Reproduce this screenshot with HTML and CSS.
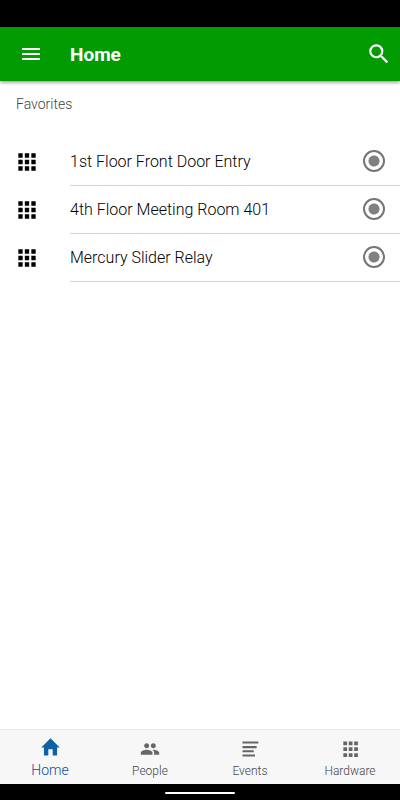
FILE: index.html
```html
<!DOCTYPE html>
<html lang="en">
<head>
    <meta charset="UTF-8">
    <meta name="viewport" content="width=device-width, initial-scale=1.0">
    <title>Home</title>
    <link rel="stylesheet" href="styles.css">
</head>
<body>

    <div class="status-bar"></div>

    <header class="app-bar">
        <button class="icon-button" aria-label="Menu">
            <svg width="24" height="24" viewBox="0 0 24 24"><path d="M3 18h18v-2H3v2zm0-5h18v-2H3v2zm0-7v2h18V6H3z"/></svg>
        </button>
        <h1 class="title">Home</h1>
        <button class="icon-button" aria-label="Search">
            <svg width="26" height="26" viewBox="0 0 24 24"><path d="M15.5 14h-.79l-.28-.27A6.47 6.47 0 0 0 16 9.5 6.5 6.5 0 1 0 9.5 16c1.61 0 3.09-.59 4.23-1.57l.27.28v.79l5 4.99L20.49 19l-4.99-5zm-6 0C7.01 14 5 11.99 5 9.5S7.01 5 9.5 5 14 7.01 14 9.5 11.99 14 9.5 14z"/></svg>
        </button>
    </header>

    <main class="content">
        <h2 class="section-title">Favorites</h2>
        <ul class="favorites">
            <li class="favorite">
                <svg class="favorite-icon" viewBox="0 0 24 24"><path d="M4 8h4V4H4v4zm6 12h4v-4h-4v4zm-6 0h4v-4H4v4zm0-6h4v-4H4v4zm6 0h4v-4h-4v4zm6-10v4h4V4h-4zm-6 4h4V4h-4v4zm6 6h4v-4h-4v4zm0 6h4v-4h-4v4z"/></svg>
                <div class="favorite-body">
                    <label for="fav-1">1st Floor Front Door Entry</label>
                    <input type="checkbox" class="toggle" id="fav-1" checked>
                </div>
            </li>
            <li class="favorite">
                <svg class="favorite-icon" viewBox="0 0 24 24"><path d="M4 8h4V4H4v4zm6 12h4v-4h-4v4zm-6 0h4v-4H4v4zm0-6h4v-4H4v4zm6 0h4v-4h-4v4zm6-10v4h4V4h-4zm-6 4h4V4h-4v4zm6 6h4v-4h-4v4zm0 6h4v-4h-4v4z"/></svg>
                <div class="favorite-body">
                    <label for="fav-2">4th Floor Meeting Room 401</label>
                    <input type="checkbox" class="toggle" id="fav-2" checked>
                </div>
            </li>
            <li class="favorite">
                <svg class="favorite-icon" viewBox="0 0 24 24"><path d="M4 8h4V4H4v4zm6 12h4v-4h-4v4zm-6 0h4v-4H4v4zm0-6h4v-4H4v4zm6 0h4v-4h-4v4zm6-10v4h4V4h-4zm-6 4h4V4h-4v4zm6 6h4v-4h-4v4zm0 6h4v-4h-4v4z"/></svg>
                <div class="favorite-body">
                    <label for="fav-3">Mercury Slider Relay</label>
                    <input type="checkbox" class="toggle" id="fav-3" checked>
                </div>
            </li>
        </ul>
    </main>

    <nav class="tab-bar">
        <a href="#home" class="tab active">
            <svg viewBox="0 0 24 24"><path d="M9.500 21v-7h5v7h5V12H22.500L12 1.500 1.500 12H4.500v9z"/></svg>
            Home
        </a>
        <a href="#people" class="tab">
            <svg viewBox="0 0 24 24"><path d="M16 11c1.660 0 2.990-1.340 2.990-3S17.660 5 16 5s-3 1.340-3 3 1.340 3 3 3zm-8 0c1.660 0 2.990-1.340 2.990-3S9.660 5 8 5 5 6.340 5 8s1.340 3 3 3zm0 2c-2.330 0-7 1.170-7 3.500V19h14v-2.500c0-2.330-4.670-3.500-7-3.500zm8 0c-.290 0-.620.020-.970.050 1.160.840 1.970 1.970 1.970 3.450V19h6v-2.500c0-2.330-4.670-3.500-7-3.500z"/></svg>
            People
        </a>
        <a href="#events" class="tab">
            <svg viewBox="0 0 24 24"><path d="M3 3h19v2.500H3zM3 8.500h17V11H3zM3 13.500h13.500V16H3zM3 18.500h15V21H3z"/></svg>
            Events
        </a>
        <a href="#hardware" class="tab">
            <svg viewBox="0 0 24 24"><path d="M4 3h4.500v4.500H4zM10.500 3H15v4.500h-4.500zM17 3h4.500v4.500H17zM4 10h4.500v4.500H4zM10.500 10H15v4.500h-4.500zM17 10h4.500v4.500H17zM4 17h4.500v4.500H4zM10.500 17H15v4.500h-4.500zM17 17h4.500v4.500H17z"/></svg>
            Hardware
        </a>
    </nav>

    <div class="gesture-bar">
        <div class="gesture-handle"></div>
    </div>

</body>
</html>
```
FILE: styles.css
```css
* {
    box-sizing: border-box;
}
body {
    margin: 0;
    min-height: 100vh;
    display: flex;
    flex-direction: column;
    font-family: Roboto, sans-serif;
    background: #fff;
    color: #000;
}
.status-bar {
    height: 27px;
    background: #000;
}
.app-bar {
    display: flex;
    align-items: center;
    height: 54px;
    padding: 0 8px 0 19px;
    background: #029c02;
    box-shadow: 0 1px 4px rgba(0, 0, 0, 0.5);
}
.icon-button {
    display: flex;
    padding: 0;
    border: none;
    background: none;
    cursor: pointer;
}
.icon-button svg {
    fill: #fff;
}
.title {
    flex: 1;
    margin: 0 0 0 27px;
    color: #fff;
    font-size: 19px;
    font-weight: 700;
}
.content {
    flex: 1;
}
.section-title {
    margin: 0;
    padding: 15px 16px 0;
    height: 57px;
    color: #444;
    font-size: 14px;
    font-weight: 300;
    line-height: 16px;
}
.favorites {
    margin: 0;
    padding: 0;
    list-style: none;
}
.favorite {
    display: flex;
    align-items: center;
    padding-left: 14px;
}
.favorite-icon {
    width: 26px;
    height: 26px;
    margin-right: 30px;
}
.favorite-body {
    flex: 1;
    display: flex;
    align-items: center;
    justify-content: space-between;
    height: 48px;
    padding: 0 15px 1px 0;
    border-bottom: 1px solid #d4d4d4;
    font-size: 16px;
    font-weight: 300;
}
.toggle {
    appearance: none;
    width: 22px;
    height: 22px;
    margin: 0;
    border: 2px solid #757575;
    border-radius: 50%;
    cursor: pointer;
}
.toggle:checked {
    background: radial-gradient(circle, #808080 5px, transparent 6px);
}
.tab-bar {
    display: flex;
    height: 55px;
    background: #f7f7f7;
    border-top: 1px solid #ebebeb;
}
.tab {
    flex: 1;
    display: flex;
    flex-direction: column;
    align-items: center;
    gap: 4px;
    padding-top: 9px;
    color: #444;
    font-size: 12px;
    font-weight: 300;
    line-height: 16px;
    text-decoration: none;
}
.tab svg {
    width: 20px;
    height: 20px;
    fill: #666;
}
.tab.active {
    padding-top: 7px;
    color: #0a4da2;
    font-size: 14px;
}
.tab.active svg {
    width: 21px;
    height: 21px;
    fill: #0d62a6;
}
.gesture-bar {
    display: flex;
    justify-content: center;
    align-items: center;
    height: 16px;
    padding-top: 2px;
    background: #000;
}
.gesture-handle {
    width: 70px;
    height: 2px;
    border-radius: 1px;
    background: #fff;
}
```
